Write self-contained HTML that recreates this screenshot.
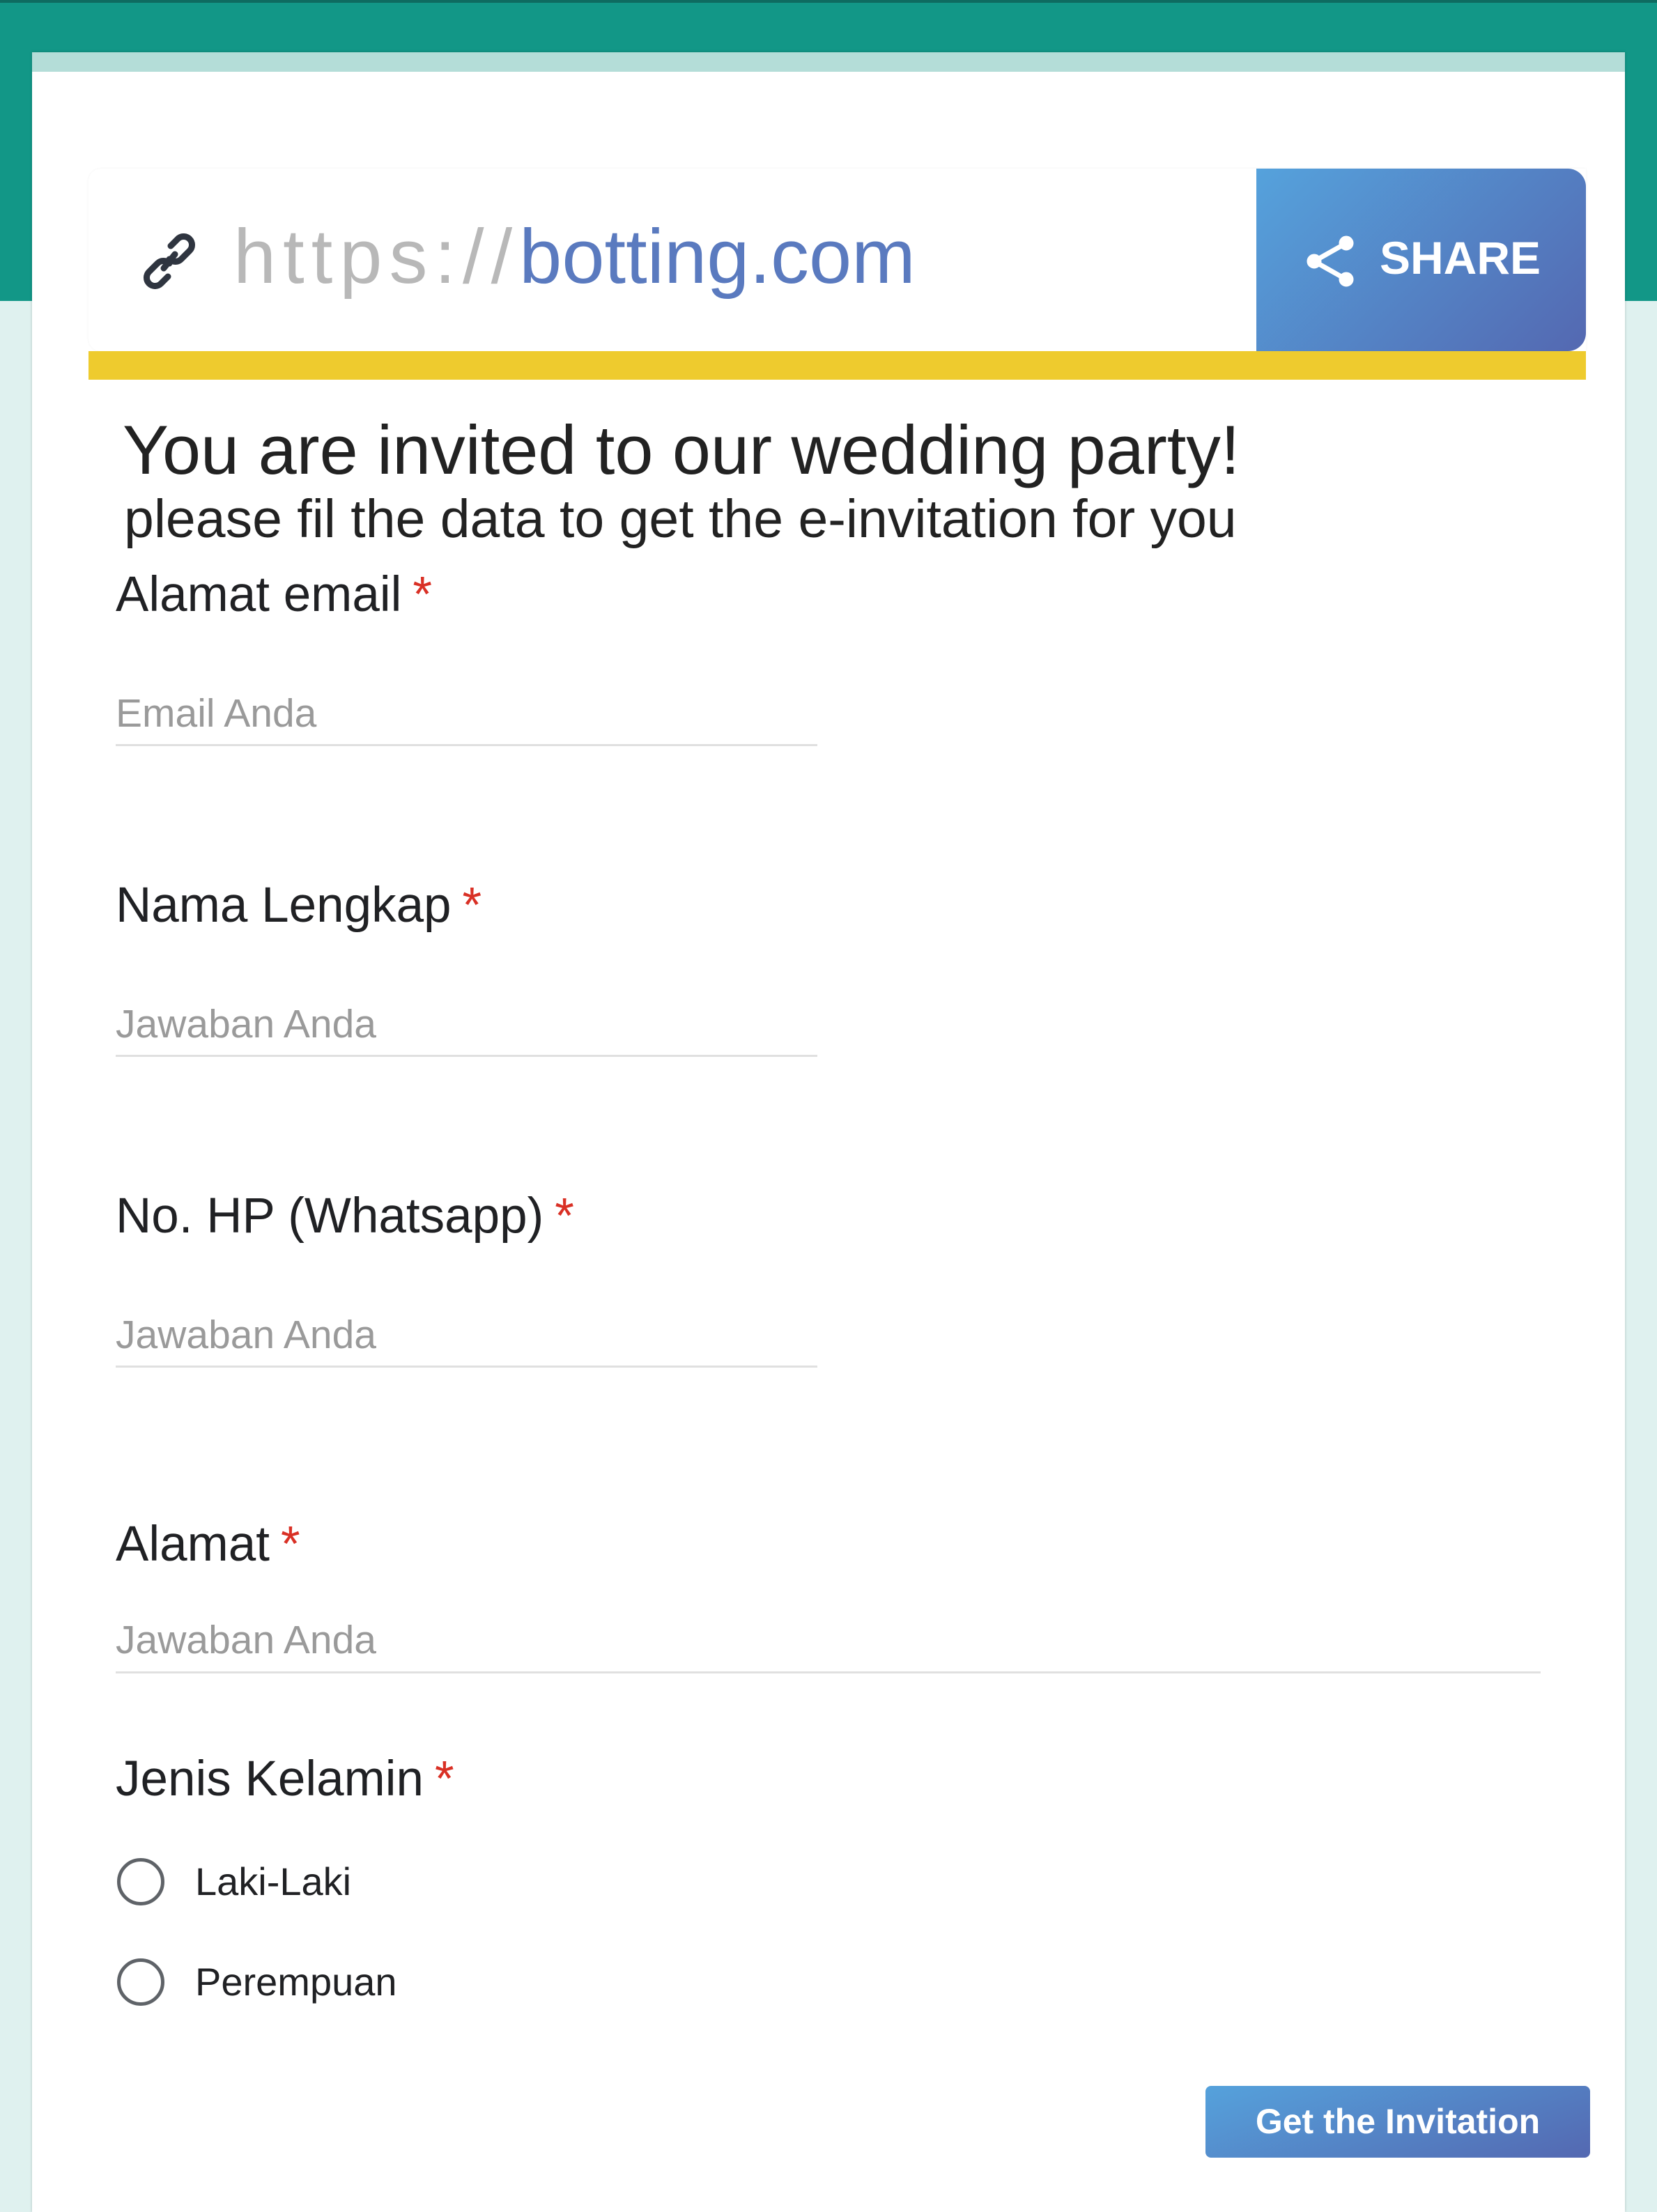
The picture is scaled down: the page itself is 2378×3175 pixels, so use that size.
<!DOCTYPE html>
<html><head><meta charset="utf-8"><style>
*{margin:0;padding:0;box-sizing:border-box}
body{width:2378px;height:3165px;position:relative;background:#dff1ef;font-family:"Liberation Sans",Arial,sans-serif;overflow:hidden}
.top{position:absolute;left:0;top:0;width:2378px;height:432px;background:#129787;border-top:4px solid #0e6b60}
.card{position:absolute;left:46px;top:75px;width:2286px;height:3100px;background:#fff;box-shadow:0 0 4px rgba(0,0,0,.2)}
.strip{position:absolute;left:46px;top:75px;width:2286px;height:28px;background:#b4ddd8}
.a{position:absolute;white-space:nowrap}
.url{position:absolute;left:127px;top:242px;width:2149px;height:262px;background:#fff;border-radius:18px 0 0 18px;box-shadow:0 0 3px rgba(0,0,0,.06)}
.share{position:absolute;left:1803px;top:242px;width:473px;height:262px;border-radius:0 26px 26px 0;background:linear-gradient(135deg,#55a2dc,#5468b1)}
.yellow{position:absolute;left:127px;top:504px;width:2149px;height:41px;background:#eecb2e}
.lbl{font-size:71px;color:#202124;line-height:80px}
.lbl b{color:#d93025;font-weight:normal;margin-left:16px}
.ph{font-size:57px;color:#9a9a9a;line-height:70px}
.line{position:absolute;left:166px;height:3px;background:#e0e0e0}
.radio{position:absolute;left:168px;width:68px;height:68px;border:5px solid #5f6368;border-radius:50%}
.btn{position:absolute;left:1730px;top:2994px;width:552px;height:103px;border-radius:8px;background:linear-gradient(160deg,#55a2dc,#5468b1);color:#fff;font-weight:bold;font-size:50px;text-align:center;line-height:103px}
</style></head><body>
<div class="top"></div>
<div class="card"></div>
<div class="strip"></div>
<div class="url"></div>
<div class="share"></div>
<div class="yellow"></div>
<svg class="a" style="left:205px;top:335px" width="76" height="80" viewBox="0 0 76 80"><g fill="none" stroke="#2f3540" stroke-width="9" stroke-linecap="round"><path d="M40 18 L50 8 a12 12 0 0 1 17 17 L55 37 a12 12 0 0 1 -17 0"/><path d="M36 62 L26 72 a12 12 0 0 1 -17 -17 L21 43 a12 12 0 0 1 17 0"/><path d="M30 50 L46 30"/></g></svg>
<div class="a" style="left:335px;top:296px;font-size:110px;line-height:145px;color:#b8b8b8"><span style="letter-spacing:10px">https://</span><span style="color:#5a7abf">botting.com</span></div>
<svg class="a" style="left:1870px;top:335px" width="80" height="80" viewBox="0 0 80 80"><g fill="#fff" stroke="#fff"><circle cx="62" cy="14" r="10"/><circle cx="16" cy="40" r="10"/><circle cx="62" cy="66" r="10"/><path d="M62 14 L16 40 L62 66" fill="none" stroke-width="7"/></g></svg>
<div class="a" style="left:1980px;top:330px;font-size:66px;line-height:80px;color:#fff;font-weight:bold">SHARE</div>
<div class="a" style="left:176px;top:588px;font-size:99px;line-height:115px;color:#222">You are invited to our wedding party!</div>
<div class="a" style="left:178px;top:700px;font-size:77px;line-height:90px;color:#222">please fil the data to get the e-invitation for you</div>
<div class="a lbl" style="left:166px;top:814px">Alamat email<b>*</b></div>
<div class="a ph" style="left:166px;top:989px">Email Anda</div>
<div class="line" style="top:1068px;width:1007px"></div>
<div class="a lbl" style="left:166px;top:1260px">Nama Lengkap<b>*</b></div>
<div class="a ph" style="left:166px;top:1435px">Jawaban Anda</div>
<div class="line" style="top:1514px;width:1007px"></div>
<div class="a lbl" style="left:166px;top:1706px">No. HP (Whatsapp)<b>*</b></div>
<div class="a ph" style="left:166px;top:1881px">Jawaban Anda</div>
<div class="line" style="top:1960px;width:1007px"></div>
<div class="a lbl" style="left:166px;top:2177px">Alamat<b>*</b></div>
<div class="a ph" style="left:166px;top:2319px">Jawaban Anda</div>
<div class="line" style="top:2399px;width:2045px"></div>
<div class="a lbl" style="left:166px;top:2514px">Jenis Kelamin<b>*</b></div>
<div class="radio" style="top:2667px"></div>
<div class="a" style="left:280px;top:2668px;font-size:56px;line-height:66px;color:#202124">Laki-Laki</div>
<div class="radio" style="top:2811px"></div>
<div class="a" style="left:280px;top:2812px;font-size:56px;line-height:66px;color:#202124">Perempuan</div>
<div class="btn">Get the Invitation</div>
</body></html>
